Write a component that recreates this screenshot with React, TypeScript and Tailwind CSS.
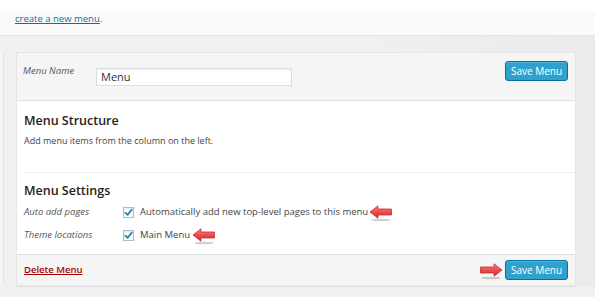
import React from "react";

function Arrow({ dir }: { dir: "left" | "right" }) {
  return (
    <svg width="24" height="17" viewBox="0 0 24 17" className="shrink-0">
      <defs>
        <linearGradient id={`ag-${dir}`} x1="0" y1="0" x2="0" y2="1">
          <stop offset="0" stopColor="#f98a8a" />
          <stop offset="0.5" stopColor="#ee4b4b" />
          <stop offset="1" stopColor="#d22b2b" />
        </linearGradient>
      </defs>
      <ellipse cx="12" cy="15" rx="10" ry="1.3" fill="#000" opacity="0.18" />
      <g transform={dir === "right" ? "translate(24,0) scale(-1,1)" : undefined}>
        <polygon
          points="1,7 9,0.8 9,4 22.5,4 22.5,10 9,10 9,13.2"
          fill={`url(#ag-${dir})`}
          stroke="#c23030"
          strokeWidth="0.8"
          strokeLinejoin="round"
        />
      </g>
    </svg>
  );
}

function Check() {
  return (
    <span className="w-[11px] h-[11px] border border-[#b4b9be] bg-white shadow-[inset_0_1px_2px_rgba(0,0,0,0.1)] flex items-center justify-center shrink-0">
      <svg width="9" height="9" viewBox="0 0 10 10">
        <path d="M1.5 5.2 L4 7.6 L8.6 1.8" fill="none" stroke="#1e8cbe" strokeWidth="2" strokeLinecap="round" strokeLinejoin="round" />
      </svg>
    </span>
  );
}

function SaveButton() {
  return (
    <button className="h-[20px] w-[63px] rounded-[3px] bg-[#2ea2cc] border border-[#0074a2] text-white text-[10px] leading-none shadow-[inset_0_1px_0_rgba(120,200,230,0.5)]">
      Save Menu
    </button>
  );
}

export default function App() {
  return (
    <div className="w-[595px] h-[297px] overflow-hidden bg-[#f1f1f1] text-[#444] font-['Open_Sans',sans-serif]">
      <div className="h-[12px] bg-white" />
      <div className="h-[24px] bg-[#fafafa] border-b border-[#e5e5e5] pl-[15px] text-[9.5px] leading-[12px] pt-[1px]">
        <a className="text-[#0074a2] underline">create a new menu</a>.
      </div>
      <div className="flex pt-[16px] bg-gradient-to-r from-[#f1f1f1] via-[#f1f1f1] to-[#ebebeb]">
        <div className="w-[4px] h-[233px] bg-[#f6f6f6] border-r border-[#e2e2e2]" />
        <div className="ml-[12px] w-[560px] border border-[#e5e5e5] shadow-[0_1px_1px_rgba(0,0,0,0.06)] bg-white">
          <div className="h-[48px] bg-[#f5f5f5] border-b border-[#dfdfdf] flex items-start pl-[6px] pr-[7px]">
            <span className="italic text-[9.5px] text-[#555] mt-[11px] w-[73px]">Menu Name</span>
            <div className="mt-[15px] w-[196px] h-[18px] bg-white border border-[#dddddd] shadow-[inset_0_1px_2px_rgba(0,0,0,0.07)] text-[11px] leading-[16px] pl-[4px] text-[#333]">
              Menu
            </div>
            <div className="ml-auto mt-[4px]">
              <SaveButton />
            </div>
          </div>
          <div className="bg-white h-[153px] pl-[7px]">
            <h3 className="pt-[12px] text-[12.5px] font-semibold text-[#222] leading-[16px]">Menu Structure</h3>
            <p className="mt-[6px] text-[9px] leading-[12px]">Add menu items from the column on the left.</p>
            <div className="mt-[25px] border-t border-[#eeeeee]" />
            <h3 className="mt-[10px] text-[12.5px] font-semibold text-[#222] leading-[16px]">Menu Settings</h3>
            <div className="mt-[5px] flex items-center h-[16px]">
              <span className="italic text-[9.5px] text-[#555] w-[99px]">Auto add pages</span>
              <Check />
              <span className="ml-[6px] text-[9.5px] text-[#444]">Automatically add new top-level pages to this menu</span>
              <span className="ml-[1px] mt-[3px]"><Arrow dir="left" /></span>
            </div>
            <div className="mt-[7px] flex items-center h-[16px]">
              <span className="italic text-[9.5px] text-[#555] w-[99px]">Theme locations</span>
              <Check />
              <span className="ml-[6px] text-[9.5px] text-[#444]">Main Menu</span>
              <span className="ml-[2px] mt-[3px]"><Arrow dir="left" /></span>
            </div>
          </div>
          <div className="h-[31px] bg-[#f5f5f5] border-t border-[#dfdfdf] flex items-center pl-[7px] pr-[7px]">
            <a className="text-[#a00] underline text-[9.5px] font-semibold">Delete Menu</a>
            <div className="ml-auto flex items-center gap-[2px]">
              <span className="mt-[3px]"><Arrow dir="right" /></span>
              <SaveButton />
            </div>
          </div>
        </div>
      </div>
    </div>
  );
}
